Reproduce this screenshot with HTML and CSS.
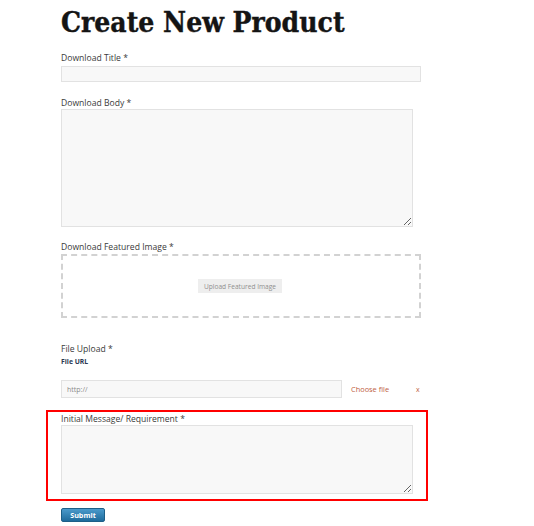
FILE: index.html
```html
<!DOCTYPE html>
<html>
<head>
<meta charset="utf-8">
<link rel="stylesheet" href="styles.css">
</head>
<body>
<div class="page">
  <h1 class="title">Create New Product</h1>

  <div class="field field-title">
    <label class="label">Download Title *</label>
    <input class="input input-wide" type="text">
  </div>

  <div class="field field-body">
    <label class="label">Download Body *</label>
    <textarea class="textarea textarea-body"></textarea>
  </div>

  <div class="field field-image">
    <label class="label">Download Featured Image *</label>
    <div class="dropzone">
      <button class="upload-btn" type="button">Upload Featured Image</button>
    </div>
  </div>

  <div class="field field-file">
    <label class="label">File Upload *</label>
    <div class="sublabel">File URL</div>
    <div class="url-row">
      <input class="input input-url" type="text" placeholder="http://">
      <span class="choose">Choose file</span>
      <span class="remove">x</span>
    </div>
  </div>

  <div class="highlight">
    <label class="label">Initial Message/ Requirement *</label>
    <textarea class="textarea textarea-msg"></textarea>
  </div>

  <button class="submit" type="button">Submit</button>
</div>
</body>
</html>
```

FILE: styles.css
```css
* { box-sizing: border-box; }

html, body {
  margin: 0;
  background: #ffffff;
}

.page {
  padding-left: 61px;
  font-family: "Open Sans", "Liberation Sans", sans-serif;
  color: #3a3a3a;
}

.title {
  margin: 6px 0 0 0;
  font-family: "DejaVu Serif Condensed", "DejaVu Serif", "Liberation Serif", serif;
  font-stretch: condensed;
  font-weight: bold;
  font-size: 28px;
  line-height: 34px;
  color: #141414;
  letter-spacing: 0;
  -webkit-text-stroke: 0.4px #141414;
}

.field { display: flex; flex-direction: column; align-items: flex-start; }

.label {
  display: block;
  font-size: 8.6px;
  line-height: 11px;
  color: #3a3a3a;
}

.field-title { margin-top: 13px; }
.field-title .input { margin-top: 2px; }

.field-body { margin-top: 16px; }
.field-image { margin-top: 15px; }
.field-file { margin-top: 26px; }

.input {
  display: block;
  height: 16px;
  border: 1px solid #e2e2e2;
  background: #f8f8f8;
  padding: 0 5px;
  font-family: "Open Sans", "Liberation Sans", sans-serif;
  font-size: 7px;
  color: #777777;
  outline: none;
}

.input-wide { width: 360px; }

.textarea {
  display: block;
  border: 1px solid #e2e2e2;
  background: #f8f8f8;
  margin: 0;
  padding: 4px;
  font-family: "Open Sans", "Liberation Sans", sans-serif;
  outline: none;
}

.textarea-body {
  width: 352px;
  height: 118px;
}

.dropzone {
  margin-top: 1px;
  width: 360px;
  height: 64px;
  border: 2px dashed #d2d2d2;
  display: flex;
  align-items: center;
  justify-content: center;
}

.upload-btn {
  margin-left: -2px;
  height: 14px;
  width: 84px;
  padding: 0;
  border: none;
  background: #eeeeee;
  color: #8e8e8e;
  font-family: "Open Sans", "Liberation Sans", sans-serif;
  font-size: 6.6px;
}

.sublabel {
  margin-top: 2px;
  font-size: 6.8px;
  line-height: 9px;
  font-weight: bold;
  color: #2a3852;
}

.url-row {
  margin-top: 14px;
  display: flex;
  align-items: center;
}

.input-url {
  width: 281px;
  height: 18px;
}

.input-url::placeholder { color: #8a8a8a; }

.choose {
  margin-left: 9px;
  font-size: 7.4px;
  color: #c0603f;
}

.remove {
  margin-left: 27px;
  font-size: 7px;
  color: #c0603f;
}

.highlight {
  margin-top: 12px;
  margin-left: -15px;
  width: 382px;
  height: 91px;
  border: 2px solid #ff0000;
  padding: 0 0 0 13px;
}

.highlight .label { margin-top: 2px; }

.textarea-msg {
  margin-top: 0;
  width: 352px;
  height: 69px;
}

.submit {
  display: block;
  margin-top: 7px;
  width: 44px;
  height: 14px;
  padding: 0;
  border: 1px solid #1d5f88;
  border-radius: 2px;
  background: linear-gradient(#4a9acb, #1e6b9c);
  color: #ffffff;
  font-family: "Open Sans", "Liberation Sans", sans-serif;
  font-weight: bold;
  font-size: 7.2px;
}
```
